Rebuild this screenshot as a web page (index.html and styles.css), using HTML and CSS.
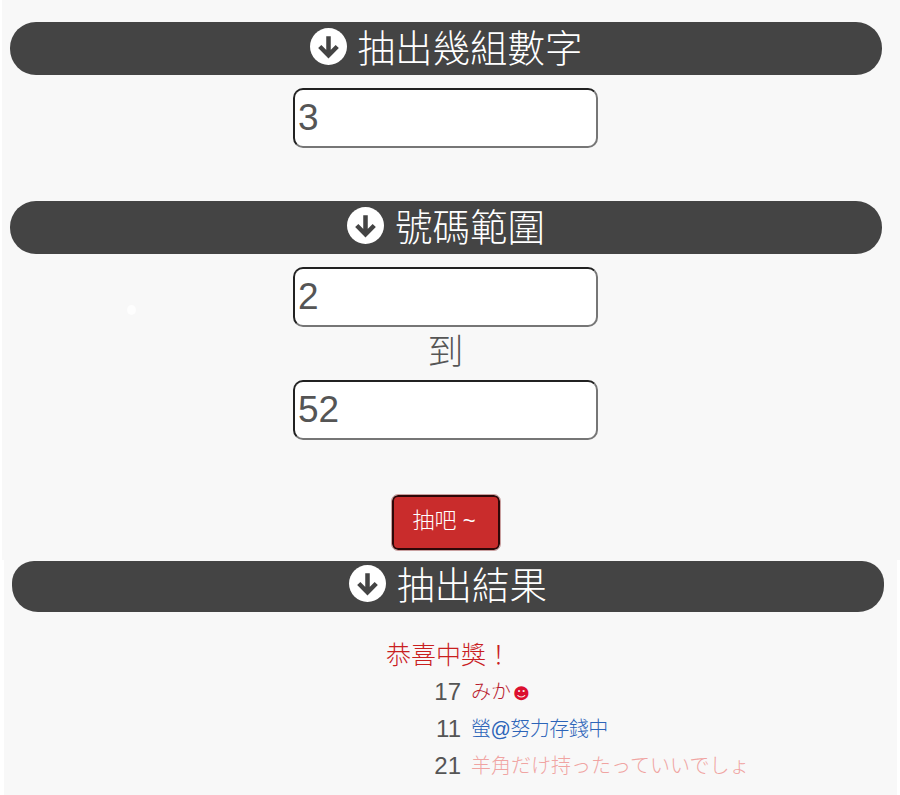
FILE: index.html
```html
<!DOCTYPE html>
<html>

<head>
    <title>抽籤</title>
    <link rel="stylesheet" href="styles.css">
</head>

<body>
    <form class="draw-form">
        <span class="sparkle"></span>

        <h2 class="bar">
            <svg class="bar-icon" viewBox="0 0 36 36">
                <circle cx="18" cy="18" r="18" fill="#fff" />
                <path d="M18 8V26M9.5 18L18 26.5L26.5 18" fill="none" stroke="#444" stroke-width="4.4" />
            </svg>
            抽出幾組數字
        </h2>
        <div class="fields">
            <input class="num-input" type="text" value="3">
        </div>

        <h2 class="bar bar-range">
            <svg class="bar-icon" viewBox="0 0 36 36">
                <circle cx="18" cy="18" r="18" fill="#fff" />
                <path d="M18 8V26M9.5 18L18 26.5L26.5 18" fill="none" stroke="#444" stroke-width="4.4" />
            </svg>
            號碼範圍
        </h2>
        <div class="fields">
            <input class="num-input" type="text" value="2">
            <div class="to-label">到</div>
            <input class="num-input" type="text" value="52">
        </div>

        <div class="actions">
            <button class="draw-btn" type="button">抽吧 ~</button>
        </div>
    </form>

    <section class="result">
        <h2 class="bar bar-result">
            <svg class="bar-icon" viewBox="0 0 36 36">
                <circle cx="18" cy="18" r="18" fill="#fff" />
                <path d="M18 8V26M9.5 18L18 26.5L26.5 18" fill="none" stroke="#444" stroke-width="4.4" />
            </svg>
            抽出結果
        </h2>
        <p class="congrats">恭喜中獎！</p>
        <div class="winners">
            <span class="win-num">17</span>
            <span class="win-name name-red">みか<span class="smile">☻</span></span>
            <span class="win-num">11</span>
            <span class="win-name name-blue">螢@努力存錢中</span>
            <span class="win-num">21</span>
            <span class="win-name name-pink">羊角だけ持ったっていいでしょ</span>
        </div>
    </section>
</body>

</html>
```

FILE: styles.css
```css
* {
    box-sizing: border-box;
}

body {
    margin: 0;
    height: 795px;
    overflow: hidden;
    background-color: #fff;
    font-family: "Liberation Sans", "Noto Sans CJK TC", sans-serif;
    font-weight: 300;
    color: #555;
}

.draw-form {
    position: relative;
    height: 560px;
    margin-left: 2px;
    padding: 22px 18px 0 8px;
    background-color: #f8f8f8;
}

.sparkle {
    position: absolute;
    left: 125px;
    top: 305px;
    width: 9px;
    height: 10px;
    border-radius: 50%;
    background-color: #fff;
    opacity: 0.8;
}

.bar {
    display: flex;
    align-items: center;
    justify-content: center;
    gap: 11px;
    height: 53px;
    margin: 0;
    padding-bottom: 6px;
    border-radius: 26px;
    background-color: #444;
    color: #fff;
    font-size: 37.5px;
    font-weight: 300;
}

.bar-icon {
    width: 37px;
    height: 37px;
    margin-top: 2px;
    flex-shrink: 0;
}

.bar-range {
    margin-top: 53px;
}

.fields {
    display: flex;
    flex-direction: column;
    align-items: center;
    margin-top: 13px;
    padding-right: 1px;
}

.num-input {
    width: 305px;
    height: 60px;
    padding: 0 2px 0 3px;
    border: 2px inset #767676;
    border-radius: 10px;
    background-color: #fff;
    color: #555;
    font-family: inherit;
    font-size: 37px;
}

.to-label {
    height: 53px;
    font-size: 36px;
    line-height: 52px;
}

.actions {
    display: flex;
    justify-content: center;
    margin-top: 55px;
}

.draw-btn {
    width: 108px;
    height: 55px;
    padding: 0 4px 9px 0;
    border: 2px solid #2e0808;
    border-radius: 6px;
    outline: 1px solid #c9a0a0;
    background-color: #c92c2c;
    color: #fff;
    font-family: inherit;
    font-size: 22px;
    font-weight: 300;
}

.result {
    height: 235px;
    margin: 0 3px 0 4px;
    padding: 1px 13px 0 8px;
    background-color: #f8f8f8;
}

.bar-result {
    height: 51px;
    padding-bottom: 8px;
    border-radius: 22px 22px 26px 26px;
}

.congrats {
    margin: 28px 0 0 374px;
    color: #c9201f;
    font-size: 25px;
    line-height: 30px;
}

.winners {
    display: grid;
    grid-template-columns: 49px auto;
    justify-content: start;
    column-gap: 10px;
    grid-auto-rows: 37px;
    align-items: center;
    margin: 3px 0 0 400px;
}

.win-num {
    text-align: right;
    font-size: 24px;
}

.win-name {
    padding-bottom: 2px;
    font-size: 20px;
}

.name-red {
    color: #b81c30;
}

.name-blue {
    color: #2c64b8;
    letter-spacing: -0.5px;
}

.name-pink {
    color: #f0a4a2;
}

.smile {
    margin-left: 2px;
    color: #dc1030;
    font-family: "DejaVu Sans", sans-serif;
    font-size: 16px;
    font-weight: 400;
}
```
